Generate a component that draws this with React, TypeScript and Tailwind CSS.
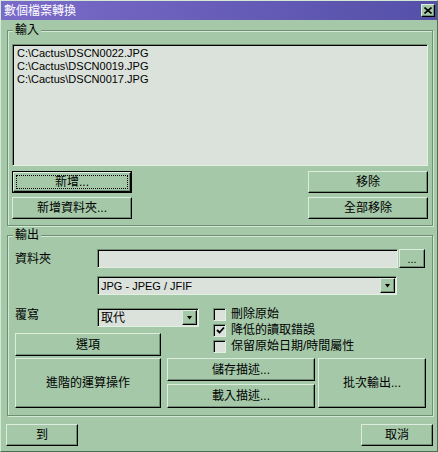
import clsx from 'clsx'
import type { ReactNode } from 'react'

// 經典 Windows 綠色主題對話框
const raised =
  'border border-t-[#dcecdd] border-l-[#dcecdd] border-r-black border-b-black shadow-[inset_-1px_-1px_#6f9073]'
const sunken =
  'border border-t-[#6f9073] border-l-[#6f9073] border-r-[#e2f0e3] border-b-[#e2f0e3] shadow-[inset_1px_1px_#000] bg-[#dbe2db]'

function Btn({
  children,
  className,
  focused = false,
}: {
  children: ReactNode
  className?: string
  focused?: boolean
}) {
  if (focused) {
    return (
      <div className={clsx('flex border border-black', className)}>
        <button className={clsx(raised, 'flex flex-1 items-center justify-center bg-[#a4c8a8] p-[2px]')}>
          <span className="flex h-full w-full items-center justify-center border border-dotted border-black">
            {children}
          </span>
        </button>
      </div>
    )
  }
  return (
    <button className={clsx(raised, 'flex items-center justify-center bg-[#a4c8a8] leading-[14px]', className)}>
      {children}
    </button>
  )
}

function Arrow() {
  return (
    <div className={clsx(raised, 'flex h-[15px] w-[15px] shrink-0 items-center justify-center bg-[#a4c8a8]')}>
      <svg width="7" height="4" viewBox="0 0 7 4">
        <polygon points="1,0 6,0 3.5,3.5" fill="#000" />
      </svg>
    </div>
  )
}

function Select({ value, className }: { value: string; className?: string }) {
  return (
    <div className={clsx(sunken, 'flex h-[19px] items-center pl-[3px] pr-[1px]', className)}>
      <span className="flex-1 leading-[14px]">{value}</span>
      <Arrow />
    </div>
  )
}

function Check({ label, checked = false }: { label: string; checked?: boolean }) {
  return (
    <div className="flex h-[16px] items-center gap-[5px]">
      <div className={clsx(sunken, 'flex h-[13px] w-[13px] items-center justify-center')}>
        {checked && (
          <svg width="9" height="9" viewBox="0 0 9 9" className="ml-[1px] mt-[1px]">
            <polyline points="1,4 3.5,6.5 8,1.5" fill="none" stroke="#000" strokeWidth="1.8" />
          </svg>
        )}
      </div>
      <span className="leading-[14px]">{label}</span>
    </div>
  )
}

function Group({ title, className, children }: { title: string; className?: string; children: ReactNode }) {
  return (
    <div
      className={clsx(
        'flex flex-col border border-[#6f9073] shadow-[inset_1px_1px_#d4e8d6,1px_1px_#d4e8d6]',
        className,
      )}
    >
      <span className="-mt-[8px] ml-[5px] w-fit bg-[#a4c8a8] px-[2px] leading-[14px]">{title}</span>
      {children}
    </div>
  )
}

export default function App() {
  const files = ['C:\\Cactus\\DSCN0022.JPG', 'C:\\Cactus\\DSCN0019.JPG', 'C:\\Cactus\\DSCN0017.JPG']

  return (
    <div className="flex h-[452px] w-[438px] flex-col border border-t-[#d4e8d6] border-l-[#d4e8d6] border-r-[#4e6e52] border-b-[#4e6e52] bg-[#a4c8a8] text-[12px] text-black [font-family:'Liberation_Sans','Noto_Sans_CJK_TC',sans-serif]">
      {/* 標題列 */}
      <div className="flex h-[19px] shrink-0 items-center justify-between bg-gradient-to-r from-[#7b6bc9] to-[#5450a8] pl-[3px] pr-[2px]">
        <span className="text-[12px] leading-[14px] text-white">數個檔案轉換</span>
        <div className={clsx(raised, 'flex h-[13px] w-[14px] items-center justify-center bg-[#a4c8a8]')}>
          <svg width="8" height="7" viewBox="0 0 8 7">
            <path d="M0.5 0.5 L7.5 6.5 M7.5 0.5 L0.5 6.5" stroke="#000" strokeWidth="1.6" />
          </svg>
        </div>
      </div>

      {/* 輸入 */}
      <Group title="輸入" className="ml-[6px] mt-[10px] h-[196px] w-[426px]">
        <div className={clsx(sunken, 'mx-[4px] mt-[7px] h-[122px] pl-[4px] pt-[2px] text-[11px] leading-[13px]')}>
          {files.map((f) => (
            <div key={f}>{f}</div>
          ))}
        </div>
        <div className="mx-[4px] mt-[5px] flex justify-between">
          <div className="flex flex-col gap-[4px]">
            <Btn focused className="h-[22px] w-[120px]">
              新增...
            </Btn>
            <Btn className="h-[22px] w-[120px]">新增資料夾...</Btn>
          </div>
          <div className="flex flex-col gap-[4px]">
            <Btn className="h-[22px] w-[120px]">移除</Btn>
            <Btn className="h-[22px] w-[120px]">全部移除</Btn>
          </div>
        </div>
      </Group>

      {/* 輸出 */}
      <Group title="輸出" className="ml-[6px] mt-[9px] h-[181px] w-[426px]">
        <div className="ml-[7px] mt-[7px] flex items-center">
          <span className="w-[82px] leading-[14px]">資料夾</span>
          <div className={clsx(sunken, 'h-[19px] w-[301px]')} />
          <Btn className="ml-[1px] h-[19px] w-[26px]">
            <span className="text-[11px]">...</span>
          </Btn>
        </div>
        <div className="ml-[89px] mt-[8px] flex">
          <Select value="JPG - JPEG / JFIF" className="w-[300px] text-[11px]" />
        </div>
        <div className="ml-[7px] mt-[11px] flex">
          <div className="flex w-[198px] flex-col">
            <div className="mt-[2px] flex items-start">
              <span className="w-[82px] leading-[14px]">覆寫</span>
              <Select value="取代" className="w-[102px]" />
            </div>
            <Btn className="mt-[6px] h-[23px] w-[146px]">選項</Btn>
          </div>
          <div className="flex flex-col">
            <Check label="刪除原始" />
            <Check label="降低的讀取錯誤" checked />
            <Check label="保留原始日期/時間屬性" />
          </div>
        </div>
        <div className="ml-[7px] mt-[2px] flex">
          <Btn className="h-[50px] w-[146px]">進階的運算操作</Btn>
          <div className="ml-[6px] flex flex-col gap-[3px]">
            <Btn className="h-[23px] w-[148px]">儲存描述...</Btn>
            <Btn className="h-[24px] w-[148px]">載入描述...</Btn>
          </div>
          <Btn className="ml-[3px] h-[50px] w-[108px]">批次輸出...</Btn>
        </div>
      </Group>

      {/* 底部按鈕 */}
      <div className="ml-[5px] mr-[4px] mt-[8px] flex justify-between">
        <Btn className="h-[22px] w-[72px]">到</Btn>
        <Btn className="h-[22px] w-[72px]">取消</Btn>
      </div>
    </div>
  )
}
